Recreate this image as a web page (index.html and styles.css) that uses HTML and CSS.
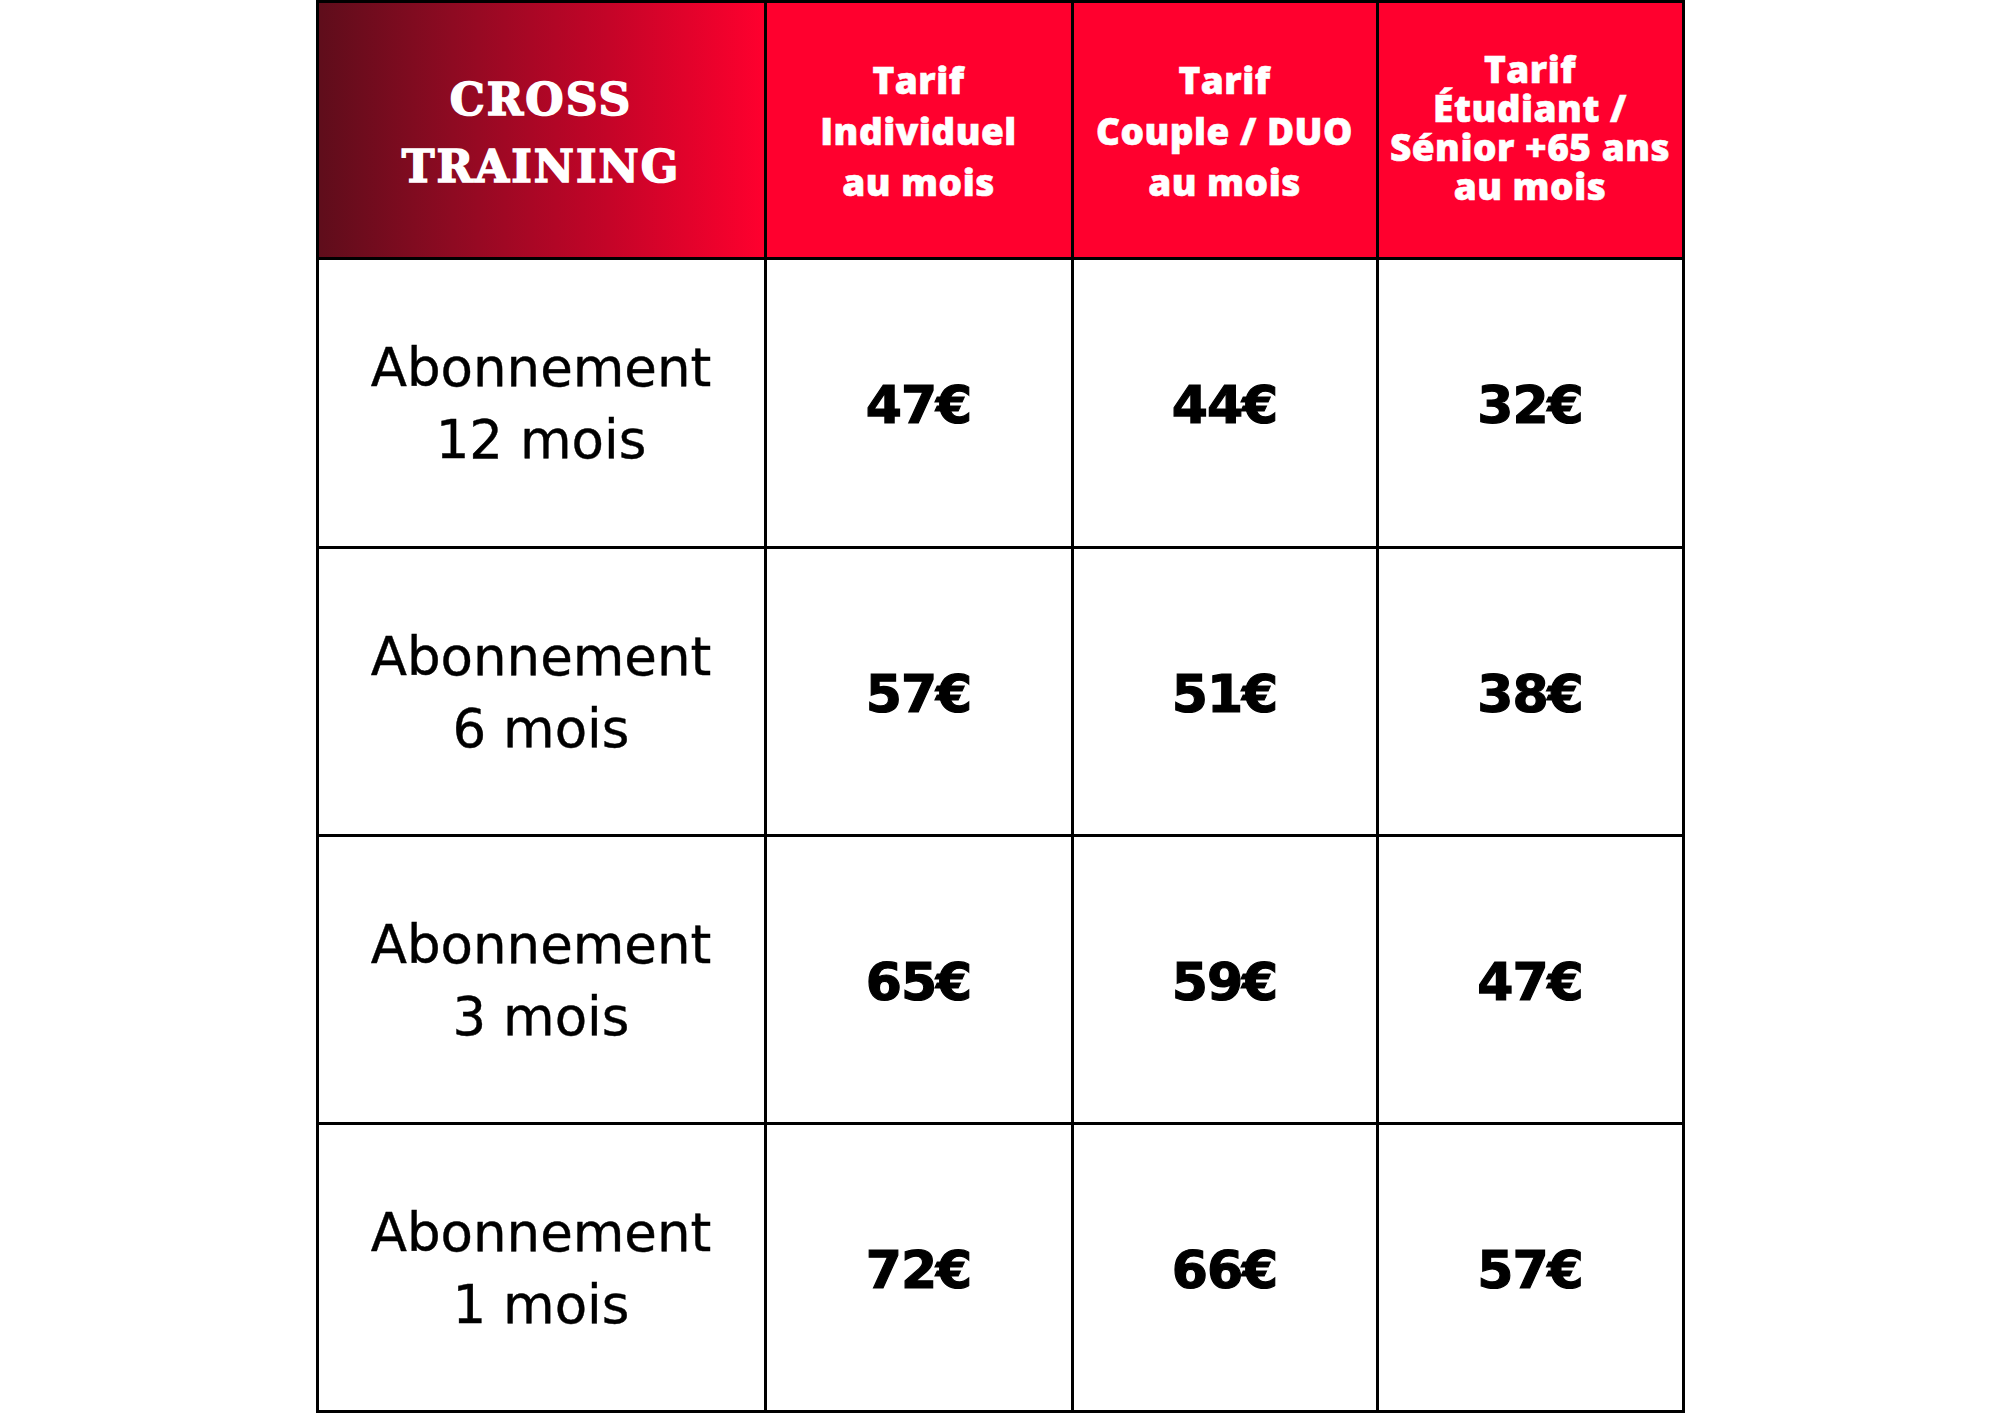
FILE: index.html
```html
<!DOCTYPE html>
<html lang="fr">
<head>
<meta charset="utf-8">
<title>Cross Training - Tarifs</title>
<link rel="stylesheet" href="styles.css">
</head>
<body>
<div class="pricing">
  <div class="cell head head-title"><span>CROSS<br>TRAINING</span></div>
  <div class="cell head"><span>Tarif<br>Individuel<br>au mois</span></div>
  <div class="cell head"><span>Tarif<br>Couple / DUO<br>au mois</span></div>
  <div class="cell head head-tight"><span>Tarif<br>Étudiant /<br>Sénior +65 ans<br>au mois</span></div>

  <div class="cell label">Abonnement<br>12 mois</div>
  <div class="cell price">47€</div>
  <div class="cell price">44€</div>
  <div class="cell price">32€</div>

  <div class="cell label">Abonnement<br>6 mois</div>
  <div class="cell price">57€</div>
  <div class="cell price">51€</div>
  <div class="cell price">38€</div>

  <div class="cell label">Abonnement<br>3 mois</div>
  <div class="cell price">65€</div>
  <div class="cell price">59€</div>
  <div class="cell price">47€</div>

  <div class="cell label">Abonnement<br>1 mois</div>
  <div class="cell price">72€</div>
  <div class="cell price">66€</div>
  <div class="cell price">57€</div>
</div>
</body>
</html>
```
FILE: styles.css
```css
html, body {
  margin: 0;
  padding: 0;
  background: #ffffff;
}

.pricing {
  width: 1369px;
  margin: 0 auto;
  box-sizing: border-box;
  padding: 3px;
  background: #000000;
  display: grid;
  grid-template-columns: 445px 304px 302px 303px;
  grid-template-rows: 254px 286px 285px 285px 285px;
  gap: 3px;
}

.cell {
  display: flex;
  align-items: center;
  justify-content: center;
  text-align: center;
  background: #ffffff;
}

.head {
  background: #ff002e;
  color: #ffffff;
  font-family: "Open Sans", "Liberation Sans", sans-serif;
  font-weight: 800;
  font-size: 37px;
  line-height: 51px;
  letter-spacing: 0.5px;
  -webkit-text-stroke: 0.6px #ffffff;
}

.head-tight {
  line-height: 39px;
}

.head-tight span {
  position: relative;
  top: -3px;
}

.head-title {
  background: linear-gradient(90deg, #5f0d1b 0%, #8e0a22 30%, #c40428 65%, #ff002e 100%);
  font-family: "DejaVu Serif", "Liberation Serif", serif;
  font-weight: 700;
  font-size: 44px;
  line-height: 67px;
  letter-spacing: 2px;
  -webkit-text-stroke: 1.5px #ffffff;
}

.head-title span {
  position: relative;
  top: 3px;
}

.label {
  color: #000000;
  font-family: "DejaVu Sans", "Liberation Sans", sans-serif;
  font-weight: 400;
  font-size: 53px;
  line-height: 72px;
  padding-top: 2px;
  -webkit-text-stroke: 0.4px #000000;
}

.price {
  color: #000000;
  font-family: "DejaVu Sans", "Liberation Sans", sans-serif;
  font-weight: 700;
  font-size: 52px;
  letter-spacing: -1px;
  padding-top: 4px;
  -webkit-text-stroke: 1.2px #000000;
}
```
